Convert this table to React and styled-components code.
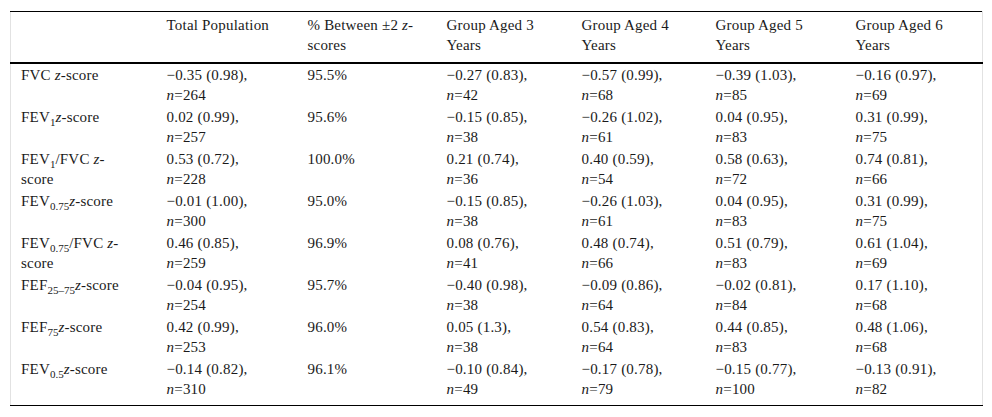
import React from "react";
import styled, { createGlobalStyle } from "styled-components";

const Global = createGlobalStyle`
  html, body { margin: 0; padding: 0; background: #fff; }
  body { font-family: "Liberation Serif", "Times New Roman", serif; color: #1a1a1a; }
`;

const Wrap = styled.div`
  padding: 11px 10px 0 10px;
`;

const Table = styled.table`
  width: 972px;
  border-collapse: collapse;
  table-layout: fixed;
  border-top: 1px solid #000;
  border-bottom: 1px solid #000;
  border-left: 1px solid #e2e2e2;
  border-right: 1px solid #e2e2e2;
  font-size: 15px;
  letter-spacing: 0.2px;
  line-height: 20px;
`;

const Th = styled.th`
  text-align: left;
  font-weight: normal;
  vertical-align: top;
  padding: 3px 10px 7px 10px;
  border-bottom: 2px solid #000;
`;

const Td = styled.td`
  text-align: left;
  vertical-align: top;
  padding: ${(p) => (p.$last ? "1px 10px 6px 10px" : "1px 10px 1px 10px")};
  ${(p) => p.$label && "padding-right: 30px;"}
`;

const Sub = styled.sub`
  font-size: 11px;
  line-height: 0;
  vertical-align: -4px;
  letter-spacing: 0;
`;

const Line = styled.span`
  display: block;
  white-space: nowrap;
`;

const widths = [146, 141, 139, 135, 134, 140, 137];

const headers = [
  "",
  "Total Population",
  <>% Between ±2 <i>z</i>-scores</>,
  "Group Aged 3 Years",
  "Group Aged 4 Years",
  "Group Aged 5 Years",
  "Group Aged 6 Years",
];

const rows = [
  [<>FVC <i>z</i>-score</>, ["−0.35 (0.98)", 264], "95.5%", ["−0.27 (0.83)", 42], ["−0.57 (0.99)", 68], ["−0.39 (1.03)", 85], ["−0.16 (0.97)", 69]],
  [<>FEV<Sub>1</Sub><i>z</i>-score</>, ["0.02 (0.99)", 257], "95.6%", ["−0.15 (0.85)", 38], ["−0.26 (1.02)", 61], ["0.04 (0.95)", 83], ["0.31 (0.99)", 75]],
  [<>FEV<Sub>1</Sub>/FVC <i>z</i>-score</>, ["0.53 (0.72)", 228], "100.0%", ["0.21 (0.74)", 36], ["0.40 (0.59)", 54], ["0.58 (0.63)", 72], ["0.74 (0.81)", 66]],
  [<>FEV<Sub>0.75</Sub><i>z</i>-score</>, ["−0.01 (1.00)", 300], "95.0%", ["−0.15 (0.85)", 38], ["−0.26 (1.03)", 61], ["0.04 (0.95)", 83], ["0.31 (0.99)", 75]],
  [<>FEV<Sub>0.75</Sub>/FVC <i>z</i>-score</>, ["0.46 (0.85)", 259], "96.9%", ["0.08 (0.76)", 41], ["0.48 (0.74)", 66], ["0.51 (0.79)", 83], ["0.61 (1.04)", 69]],
  [<>FEF<Sub>25–75</Sub><i>z</i>-score</>, ["−0.04 (0.95)", 254], "95.7%", ["−0.40 (0.98)", 38], ["−0.09 (0.86)", 64], ["−0.02 (0.81)", 84], ["0.17 (1.10)", 68]],
  [<>FEF<Sub>75</Sub><i>z</i>-score</>, ["0.42 (0.99)", 253], "96.0%", ["0.05 (1.3)", 38], ["0.54 (0.83)", 64], ["0.44 (0.85)", 83], ["0.48 (1.06)", 68]],
  [<>FEV<Sub>0.5</Sub><i>z</i>-score</>, ["−0.14 (0.82)", 310], "96.1%", ["−0.10 (0.84)", 49], ["−0.17 (0.78)", 79], ["−0.15 (0.77)", 100], ["−0.13 (0.91)", 82]],
];

const renderCell = (c) =>
  Array.isArray(c) ? (
    <>
      <Line>{c[0]},</Line>
      <Line>
        <i>n</i>={c[1]}
      </Line>
    </>
  ) : (
    c
  );

export default function App() {
  return (
    <>
      <Global />
      <Wrap>
        <Table>
          <colgroup>
            {widths.map((w, i) => (
              <col key={i} style={{ width: w }} />
            ))}
          </colgroup>
          <thead>
            <tr>
              {headers.map((h, i) => (
                <Th key={i}>{h}</Th>
              ))}
            </tr>
          </thead>
          <tbody>
            {rows.map((r, ri) => (
              <tr key={ri}>
                {r.map((c, ci) => (
                  <Td key={ci} $label={ci === 0} $last={ri === rows.length - 1}>
                    {renderCell(c)}
                  </Td>
                ))}
              </tr>
            ))}
          </tbody>
        </Table>
      </Wrap>
    </>
  );
}
